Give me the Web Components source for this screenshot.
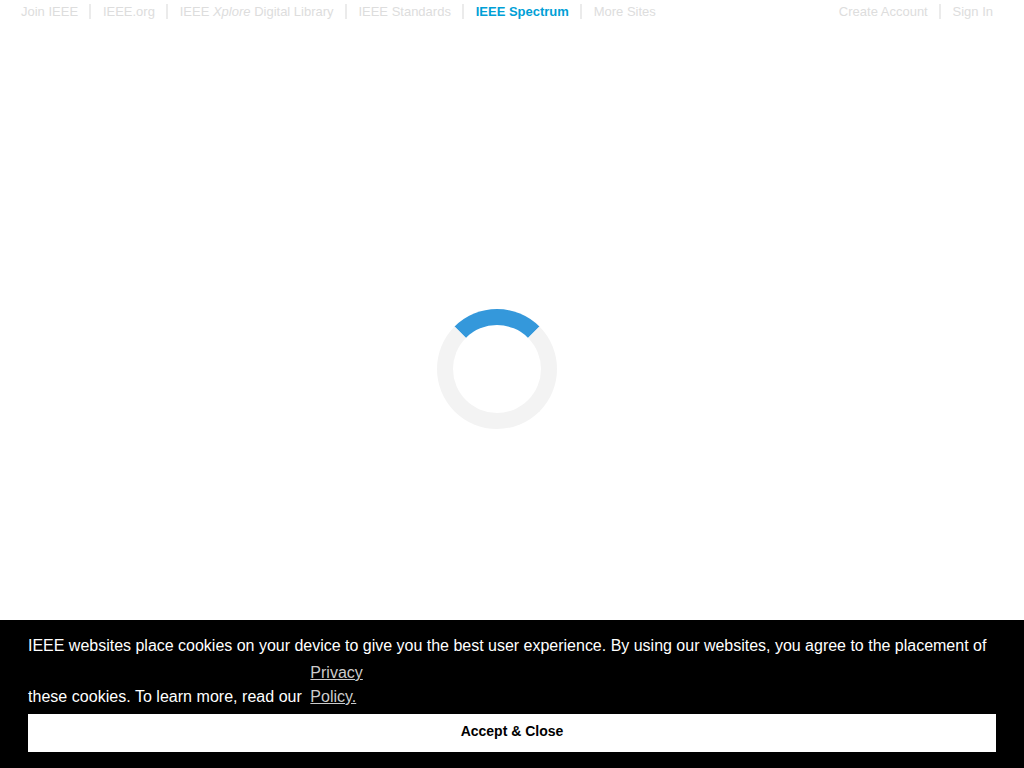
<!DOCTYPE html>
<html lang="en">
<head>
<meta charset="utf-8">
<title>IEEE Spectrum</title>
<style>
  html, body { margin: 0; height: 100%; background: #fff; font-family: "Liberation Sans", Arial, sans-serif; }
</style>
</head>
<body>
<top-nav></top-nav>
<loading-spinner></loading-spinner>
<cookie-banner></cookie-banner>

<script>
// ================ Top nav ================
class TopNav extends HTMLElement {
  constructor() {
    super();
    const shadow = this.attachShadow({ mode: "open" });
    shadow.innerHTML = `
    <style>
      :host { display: flex; justify-content: space-between; height: 24px; padding: 0 31px 0 21px; font-size: 13px; line-height: 23px; color: #ddd; }
      ul { display: flex; margin: 0; padding: 0; list-style: none; }
      li { display: flex; }
      li + li::before { content: ""; width: 2px; height: 15px; margin: 4px 11.4px 0; background: #ebebeb; }
      a { color: inherit; text-decoration: none; }
      .on { color: #00a0d6; font-weight: bold; }
    </style>
    <ul>
      <li><a>Join IEEE</a></li>
      <li><a>IEEE.org</a></li>
      <li><a>IEEE <em>Xplore</em> Digital Library</a></li>
      <li><a>IEEE Standards</a></li>
      <li><a class="on">IEEE Spectrum</a></li>
      <li><a>More Sites</a></li>
    </ul>
    <ul>
      <li><a>Create Account</a></li>
      <li><a>Sign In</a></li>
    </ul>`;
  }
}
customElements.define("top-nav", TopNav);

// ================ Spinner ================
class LoadingSpinner extends HTMLElement {
  constructor() {
    super();
    const shadow = this.attachShadow({ mode: "open" });
    shadow.innerHTML = `
    <style>
      :host { display: flex; justify-content: center; padding: 285px 30px 0 0; }
      .ring { box-sizing: border-box; width: 120px; height: 120px; border: 16px solid #f3f3f3; border-top-color: #3498db; border-radius: 50%; }
    </style>
    <div class="ring"></div>`;
  }
}
customElements.define("loading-spinner", LoadingSpinner);

// ================ Cookie banner ================
class CookieBanner extends HTMLElement {
  constructor() {
    super();
    const shadow = this.attachShadow({ mode: "open" });
    shadow.innerHTML = `
    <style>
      :host { display: block; position: fixed; left: 0; right: 0; bottom: 0; height: 148px; box-sizing: border-box; padding: 12px 28px 0; background: #000; color: #fff; font-size: 16px; line-height: 27px; }
      p { margin: 0 0 4px; }
      .tight { letter-spacing: -0.01px; }
      .wide { letter-spacing: 0.03px; }
      a { display: inline-block; width: 62px; margin: 2px 0 0 4px; line-height: 24px; color: #ccc; text-decoration: underline; }
      button { display: block; width: 100%; height: 38px; padding: 0 0 5px; border: 0; background: #fff; color: #000; font: bold 14px "Liberation Sans", Arial, sans-serif; }
    </style>
    <p><span class="tight">IEEE websites place cookies on your device to give you the best user experience. By using our websites, you agree to the placement of</span> <span class="wide">these cookies. To learn more, read our</span> <a>Privacy Policy.</a></p>
    <button>Accept &amp; Close</button>`;
  }
}
customElements.define("cookie-banner", CookieBanner);
</script>
</body>
</html>
